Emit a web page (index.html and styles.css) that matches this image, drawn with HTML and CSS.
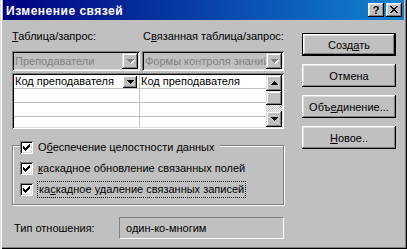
FILE: index.html
```html
<!DOCTYPE html>
<html lang="ru">
<head>
<meta charset="utf-8">
<title>Изменение связей</title>
<link rel="stylesheet" href="styles.css">
</head>
<body>
<div class="window">
  <div class="titlebar">
    <span class="title">Изменение связей</span>
    <div class="tbtns">
      <span class="tbtn help">?</span>
      <span class="tbtn close"><svg width="8" height="7" viewBox="0 0 8 7" shape-rendering="crispEdges"><path d="M0 0h2v1h-2z M6 0h2v1h-2z M1 1h2v1h-2z M5 1h2v1h-2z M2 2h4v1h-4z M3 3h2v1h-2z M2 4h4v1h-4z M1 5h2v1h-2z M5 5h2v1h-2z M0 6h2v1h-2z M6 6h2v1h-2z" fill="#000"/></svg></span>
    </div>
  </div>
  <div class="body">
    <div class="left">
      <div class="row2 labels">
        <span class="lbl lbl1"><u>Т</u>аблица/запрос:</span>
        <span class="lbl">С<u>в</u>язанная таблица/запрос:</span>
      </div>
      <div class="row2 combos">
        <div class="combo combo1">
          <span class="ctext">Преподаватели</span>
          <span class="cbtn"><svg width="8" height="5" viewBox="0 0 8 5" shape-rendering="crispEdges"><path d="M1 1h7v1h-7z M2 2h5v1h-5z M3 3h3v1h-3z M4 4h1v1h-1z" fill="#fff"/><path d="M0 0h7v1h-7z M1 1h5v1h-5z M2 2h3v1h-3z M3 3h1v1h-1z" fill="#808080"/></svg></span>
        </div>
        <div class="combo combo2">
          <span class="ctext">Формы контроля знаний</span>
          <span class="cbtn"><svg width="8" height="5" viewBox="0 0 8 5" shape-rendering="crispEdges"><path d="M1 1h7v1h-7z M2 2h5v1h-5z M3 3h3v1h-3z M4 4h1v1h-1z" fill="#fff"/><path d="M0 0h7v1h-7z M1 1h5v1h-5z M2 2h3v1h-3z M3 3h1v1h-1z" fill="#808080"/></svg></span>
        </div>
      </div>
      <div class="grid">
        <div class="gtable">
          <div class="cell c1"><span class="gtext">Код преподавателя</span><span class="gdrop"><svg width="7" height="4" viewBox="0 0 7 4" shape-rendering="crispEdges"><path d="M0 0h7v1h-7z M1 1h5v1h-5z M2 2h3v1h-3z M3 3h1v1h-1z" fill="#000"/></svg></span></div>
          <div class="cell"><span class="gtext">Код преподавателя</span></div>
          <div class="cell c1"></div>
          <div class="cell"></div>
          <div class="cell c1"></div>
          <div class="cell"></div>
          <div class="cell c1"></div>
          <div class="cell"></div>
        </div>
        <div class="vscroll">
          <span class="sbtn"><svg width="7" height="4" viewBox="0 0 7 4" shape-rendering="crispEdges"><path d="M3 0h1v1h-1z M2 1h3v1h-3z M1 2h5v1h-5z M0 3h7v1h-7z" fill="#000"/></svg></span>
          <span class="thumb"></span>
          <span class="track"></span>
          <span class="sbtn"><svg width="7" height="4" viewBox="0 0 7 4" shape-rendering="crispEdges"><path d="M0 0h7v1h-7z M1 1h5v1h-5z M2 2h3v1h-3z M3 3h1v1h-1z" fill="#000"/></svg></span>
        </div>
      </div>
      <div class="group">
        <div class="crow legend">
          <span class="chk"><svg width="9" height="9" viewBox="0 0 9 9" shape-rendering="crispEdges"><path d="M7 1h1v1h-1z M6 2h2v1h-2z M1 3h1v1h-1z M5 3h3v1h-3z M1 4h2v1h-2z M4 4h3v1h-3z M1 5h5v1h-5z M2 6h3v1h-3z M3 7h1v1h-1z" fill="#000"/></svg></span>
          <span class="ctxt">О<u>б</u>еспечение целостности данных</span>
        </div>
        <div class="crow">
          <span class="chk"><svg width="9" height="9" viewBox="0 0 9 9" shape-rendering="crispEdges"><path d="M7 1h1v1h-1z M6 2h2v1h-2z M1 3h1v1h-1z M5 3h3v1h-3z M1 4h2v1h-2z M4 4h3v1h-3z M1 5h5v1h-5z M2 6h3v1h-3z M3 7h1v1h-1z" fill="#000"/></svg></span>
          <span class="ctxt"><u>к</u>аскадное обновление связанных полей</span>
        </div>
        <div class="crow">
          <span class="chk"><svg width="9" height="9" viewBox="0 0 9 9" shape-rendering="crispEdges"><path d="M7 1h1v1h-1z M6 2h2v1h-2z M1 3h1v1h-1z M5 3h3v1h-3z M1 4h2v1h-2z M4 4h3v1h-3z M1 5h5v1h-5z M2 6h3v1h-3z M3 7h1v1h-1z" fill="#000"/></svg></span>
          <span class="ctxt focus">ка<u>с</u>кадное удаление связанных записей</span>
        </div>
      </div>
      <div class="reltype">
        <span class="rlabel">Тип отношения:</span>
        <span class="rbox">один-ко-многим</span>
      </div>
    </div>
    <div class="buttons">
      <span class="btn default">Созд<u>а</u>ть</span>
      <span class="btn">Отмена</span>
      <span class="btn">Объ<u>е</u>динение...</span>
      <span class="btn"><u>Н</u>овое..</span>
    </div>
  </div>
</div>
</body>
</html>
```
FILE: styles.css
```css
* { box-sizing: border-box; }
html, body { margin: 0; padding: 0; }
body {
  width: 407px;
  height: 249px;
  overflow: hidden;
  background: #c0c0c0;
  font-family: "Liberation Sans", Arial, sans-serif;
  font-size: 11px;
  color: #000;
}
u { text-underline-offset: 1px; }

.window {
  width: 407px;
  height: 249px;
  background: #c0c0c0;
  padding: 0 3px 3px 3px;
  box-shadow: inset 1px 0 #dfdfdf, inset 2px 0 #fff, inset -1px -1px #000, inset -2px -2px #808080;
  display: flex;
  flex-direction: column;
}

.titlebar {
  height: 20px;
  flex: none;
  background: linear-gradient(to right, #000080, #1084d0);
  display: flex;
  justify-content: space-between;
  align-items: flex-start;
  padding: 0 2px 0 3px;
}
.title {
  color: #fff;
  font-weight: bold;
  font-size: 12px;
  letter-spacing: 0.5px;
  line-height: 14px;
  margin-top: 4px;
}
.tbtns { display: flex; gap: 2px; margin-top: 3px; }
.tbtn {
  width: 16px;
  height: 14px;
  background: #c0c0c0;
  box-shadow: inset -1px -1px #000, inset 1px 1px #fff, inset -2px -2px #808080, inset 2px 2px #dfdfdf;
  display: flex;
  align-items: center;
  justify-content: center;
}
.help { font-weight: bold; font-size: 11px; line-height: 12px; padding-bottom: 1px; }
.close svg { display: block; margin-left: -1px; margin-top: -1px; }

.body {
  flex: 1;
  display: flex;
  gap: 18px;
  padding: 0 7px 0 9px;
}
.left { width: 272px; display: flex; flex-direction: column; }
.row2 { display: flex; gap: 2px; }
.labels { margin-top: 10px; line-height: 13px; white-space: nowrap; }
.lbl1 { width: 129px; }

.combos { margin-top: 8px; }
.combo {
  height: 20px;
  background: #c0c0c0;
  padding: 2px;
  display: flex;
  align-items: center;
  box-shadow: inset 1px 1px #808080, inset -1px -1px #fff, inset 2px 2px #000, inset -2px -2px #dfdfdf;
}
.combo1 { width: 128px; }
.combo2 { width: 142px; }
.ctext {
  flex: 1;
  min-width: 0;
  white-space: nowrap;
  color: #808080;
  padding-left: 1px;
  line-height: 16px;
  overflow: visible;
}
.cbtn {
  position: relative;
  width: 16px;
  height: 16px;
  flex: none;
  margin-left: -6px;
  background: #c0c0c0;
  box-shadow: inset -1px -1px #000, inset 1px 1px #dfdfdf, inset -2px -2px #808080, inset 2px 2px #fff;
  display: flex;
  align-items: center;
  justify-content: center;
}
.cbtn svg { display: block; margin-left: 1px; }

.grid {
  margin-top: 2px;
  height: 56px;
  display: flex;
  background: #fff;
  padding: 2px;
  box-shadow: inset 1px 1px #808080, inset -1px -1px #fff, inset 2px 2px #000, inset -2px -2px #dfdfdf;
}
.gtable {
  flex: 1;
  display: grid;
  grid-template-columns: 126px 1fr;
  grid-auto-rows: 14px;
  align-content: start;
  overflow: hidden;
}
.cell {
  border-bottom: 1px solid #c0c0c0;
  display: flex;
  align-items: center;
  padding-left: 1px;
  white-space: nowrap;
  overflow: hidden;
  line-height: 13px;
}
.cell.c1 { border-right: 1px solid #c0c0c0; }
.gtext { flex: none; }
.gdrop {
  margin-left: auto;
  margin-right: 2px;
  width: 14px;
  height: 12px;
  flex: none;
  background: #c0c0c0;
  box-shadow: inset -1px -1px #000, inset 1px 1px #fff, inset -2px -2px #808080;
  display: flex;
  align-items: center;
  justify-content: center;
}
.gdrop svg { display: block; }

.vscroll { width: 16px; display: flex; flex-direction: column; }
.sbtn, .thumb {
  width: 16px;
  background: #c0c0c0;
  box-shadow: inset -1px -1px #000, inset 1px 1px #dfdfdf, inset -2px -2px #808080, inset 2px 2px #fff;
  flex: none;
}
.sbtn { height: 16px; display: flex; align-items: center; justify-content: center; }
.sbtn svg { display: block; }
.thumb { height: 14px; }
.track {
  flex: 1;
  background: repeating-conic-gradient(#c0c0c0 0 25%, #fff 0 50%) 0 0 / 2px 2px;
}

.group {
  margin-top: 16px;
  height: 60px;
  border: 1px solid #808080;
  box-shadow: inset 1px 1px #fff, 1px 1px #fff;
  padding: 0 7px;
  display: flex;
  flex-direction: column;
  gap: 8px;
}
.crow { height: 13px; display: flex; align-items: center; gap: 5px; white-space: nowrap; }
.legend { margin-top: -5px; align-self: flex-start; background: #c0c0c0; padding-right: 6px; }
.chk {
  width: 13px;
  height: 13px;
  flex: none;
  background: #fff;
  padding: 2px;
  box-shadow: inset 1px 1px #808080, inset -1px -1px #fff, inset 2px 2px #000, inset -2px -2px #dfdfdf;
}
.chk svg { display: block; }
.ctxt { line-height: 13px; }
.focus {
  border: 1px dotted #000;
  padding: 1px 1px;
  margin-left: -1px;
}

.reltype {
  margin-top: 12px;
  height: 22px;
  display: flex;
  align-items: center;
}
.rlabel { width: 107px; padding-left: 2px; flex: none; }
.rbox {
  flex: 1;
  height: 22px;
  display: flex;
  align-items: center;
  padding-left: 6px;
  border-top: 1px solid #808080;
  border-left: 1px solid #808080;
  border-bottom: 1px solid #fff;
  border-right: 1px solid #fff;
}

.buttons {
  width: 94px;
  padding-top: 13px;
  display: flex;
  flex-direction: column;
  gap: 8px;
}
.btn {
  width: 94px;
  height: 23px;
  display: flex;
  align-items: center;
  justify-content: center;
  background: #c0c0c0;
  box-shadow: inset -1px -1px #000, inset 1px 1px #fff, inset -2px -2px #808080, inset 2px 2px #dfdfdf;
  white-space: nowrap;
}
.btn.default {
  border: 1px solid #000;
}
```
